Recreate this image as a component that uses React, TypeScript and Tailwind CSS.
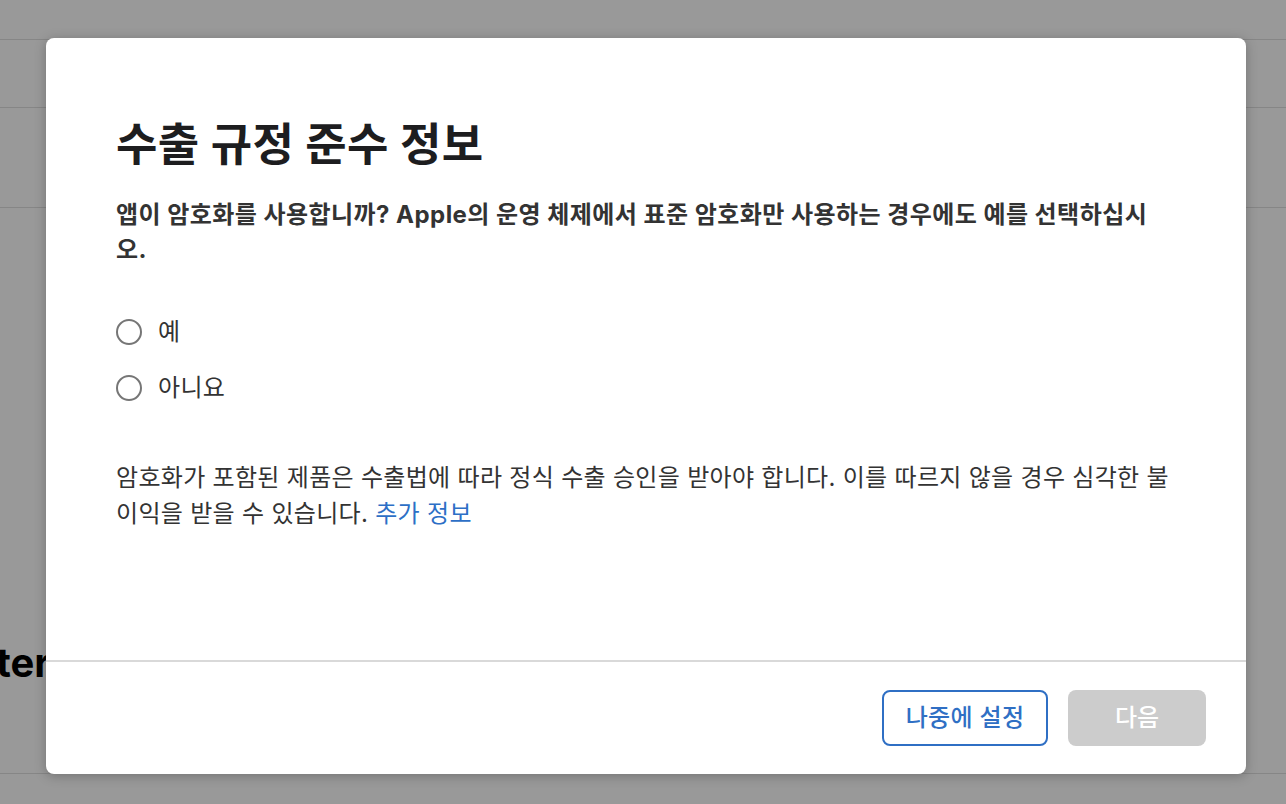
import React from "react";

const font = { fontFamily: '"Inter", "Noto Sans CJK KR", sans-serif' };

function Radio({ label }: { label: string }) {
  return (
    <label className="flex items-center gap-[16px] h-[56px] cursor-pointer">
      <span className="w-[26px] h-[26px] rounded-full border-2 border-[#767676] bg-white shrink-0" />
      <span className="text-[24px] text-[#333333] leading-none tracking-[0.3px]">{label}</span>
    </label>
  );
}

export default function App() {
  return (
    <div className="relative w-full h-[804px] overflow-hidden bg-[#999999]" style={font}>
      {/* background page (dimmed) */}
      <div className="flex flex-col">
        <div className="h-[40px] border-b border-[#868686]" />
        <div className="h-[68px] border-b border-[#868686]" />
        <div className="h-[100px] border-b border-[#868686]" />
        <div className="h-[566px] border-b border-[#868686] flex flex-col justify-end pb-[90px]">
          <span className="-ml-[53px] text-[40px] font-bold text-black leading-none">Enter</span>
        </div>
      </div>

      {/* modal */}
      <div className="absolute left-[46px] top-[38px] w-[1200px] h-[736px] bg-white rounded-[8px] shadow-[0_2px_12px_rgba(0,0,0,0.25)] flex flex-col">
        <div className="flex-1 pl-[70px] pr-[76px] pt-[81px] break-all">
          <h1 className="text-[45px] font-bold text-[#1d1d1f] leading-[52px] tracking-[0.4px]">
            수출 규정 준수 정보
          </h1>
          <p className="mt-[26px] text-[24px] font-bold text-[#333333] leading-[35px] tracking-[0.45px]">
            앱이 암호화를 사용합니까? Apple의 운영 체제에서 표준 암호화만 사용하는 경우에도 예를 선택하십시오.
          </p>
          <div className="mt-[37px] flex flex-col">
            <Radio label="예" />
            <Radio label="아니요" />
          </div>
          <p className="mt-[44px] text-[24px] text-[#333333] leading-[36px] tracking-[0.3px]">
            암호화가 포함된 제품은 수출법에 따라 정식 수출 승인을 받아야 합니다. 이를 따르지 않을 경우 심각한 불이익을 받을 수 있습니다.{" "}
            <a className="text-[#2d6fc6]">추가 정보</a>
          </p>
        </div>
        <div className="border-t-2 border-[#d9d9d9] flex justify-end gap-[20px] pt-[28px] pb-[28px] pr-[40px]">
          <button className="w-[166px] h-[56px] rounded-[8px] border-2 border-[#2f6fc4] text-[#2f6fc4] text-[24px] font-medium bg-white tracking-[0.3px]">
            나중에 설정
          </button>
          <button className="w-[138px] h-[56px] rounded-[8px] bg-[#cccccc] text-white text-[24px] font-medium">
            다음
          </button>
        </div>
      </div>
    </div>
  );
}
